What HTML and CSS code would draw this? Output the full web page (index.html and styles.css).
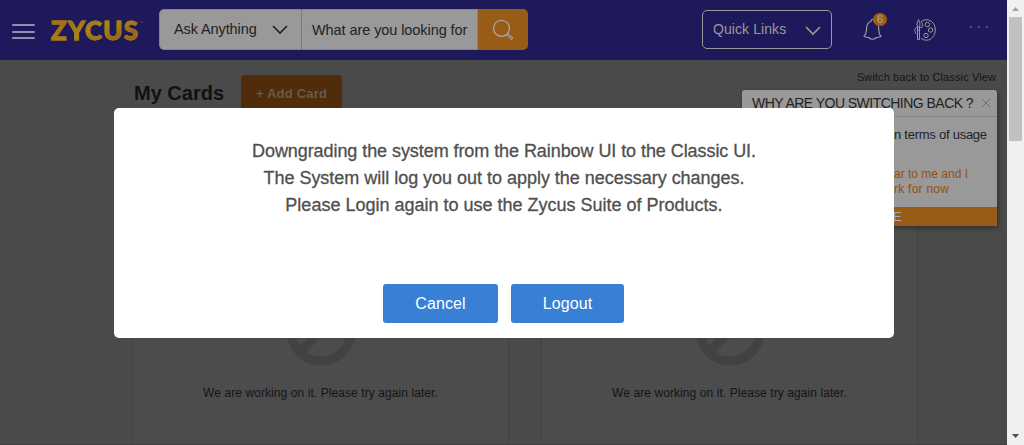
FILE: index.html
```html
<!DOCTYPE html>
<html lang="en">
<head>
<meta charset="utf-8">
<title>Zycus</title>
<link rel="stylesheet" href="styles.css">
</head>
<body>
<div class="app">
  <div class="page">
    <header class="header">
      <div class="burger"><i></i><i></i><i></i></div>
      <div class="logo"><span class="logo-text">ZYCUS</span><span class="tm">™</span></div>
      <div class="search">
        <div class="scope"><span>Ask Anything</span>
          <svg width="16" height="10" viewBox="0 0 16 10"><path d="M1 1l7 7 7-7" fill="none" stroke="#222" stroke-width="1.7"/></svg>
        </div>
        <div class="query">What are you looking for</div>
        <div class="go">
          <svg width="22" height="22" viewBox="0 0 22 22" fill="none" stroke="#a9a4a0"><circle cx="9.5" cy="9.3" r="8" stroke-width="1.3"/><path d="M15 15l5.5 5" stroke-width="2.6"/><path d="M15.5 15.5l4.5 4" stroke="#71512b" stroke-width=".8"/></svg>
        </div>
      </div>
      <div class="quick"><span>Quick Links</span>
        <svg width="16" height="10" viewBox="0 0 16 10"><path d="M1 1l7 7 7-7" fill="none" stroke="#999" stroke-width="1.7"/></svg>
      </div>
      <div class="bell">
        <svg width="20" height="24" viewBox="0 0 20 24" fill="none" stroke="#9998a5" stroke-width="1.2"><path d="M8 3.500c0-3 3-3 3 0 3 .7 4.700 3 4.700 6.500 0 4.500.3 6.500 2.300 8.500-2 .9-3.500 1-5 1.100-1.500 2.200-5.500 2.200-7 0-2-.1-3-.2-5-1.100 2.400-3 2.500-4.500 2.700-9C4 6 5.500 4 8 3.500z"/></svg>
        <span class="badge">6</span>
      </div>
      <svg class="palette" width="24" height="24" viewBox="0 0 24 24" fill="none" stroke="#9998a5" stroke-width="1"><path d="M8 4c2-2 4-2.500 6-2.200 5 .6 8.400 4.700 8.300 10.200-.1 6-4 10.200-8.800 10.200-2.500 0-4-.7-5.500-2M3.500 9.200c-2.300 2.300-2.300 4.500 0 7M7.200 9.500c2.600.3 2.800-1.300 2.300-3.300C9.200 4.900 8.900 4.400 8 4"/><path d="M5.500 1.500c1.600 3 1.800 5 1 7.500v12.500h-2V9c-.8-2.500-.6-4.500 1-7.500zM3.800 9h3.400M3.800 12h3.400"/><circle cx="14.400" cy="6.500" r="2.200"/><circle cx="17.600" cy="12" r="2.200"/><circle cx="13" cy="17.500" r="2.200"/></svg>
      <div class="more"><i></i><i></i><i></i></div>
    </header>
    <div class="title-row">
      <h1>My Cards</h1>
      <div class="add"><span>+ Add Card</span></div>
      <div class="switch"><span>Switch back to Classic View</span></div>
    </div>
    <main class="cards">
      <section class="card">
        <svg width="70" height="70" viewBox="0 0 70 70" fill="none" stroke="#424242" stroke-width="9"><circle cx="35" cy="35" r="30"/><path d="M14 56L56 14"/></svg>
        <p>We are working on it. Please try again later.</p>
      </section>
      <section class="card">
        <svg width="70" height="70" viewBox="0 0 70 70" fill="none" stroke="#424242" stroke-width="9"><circle cx="35" cy="35" r="30"/><path d="M14 56L56 14"/></svg>
        <p>We are working on it. Please try again later.</p>
      </section>
    </main>
  </div>
  <div class="scrollbar">
    <svg width="17" height="17" viewBox="0 0 17 17"><path d="M5 11l3.500-4 3.500 4z" fill="#a3a3a3"/></svg>
    <div class="thumb"></div>
    <svg width="17" height="17" viewBox="0 0 17 17"><path d="M5 6l3.500 4L12 6z" fill="#505050"/></svg>
  </div>
</div>

<aside class="popover">
  <div class="pop-head"><span>WHY ARE YOU SWITCHING BACK ?</span>
    <svg width="10" height="10" viewBox="0 0 10 10"><path d="M.5.5l9 9M9.500.5l-9 9" stroke="#707070"/></svg>
  </div>
  <div class="pop-body">
    <p class="usage">n terms of usage</p>
    <p class="reason r1">ar to me and I</p>
    <p class="reason r2">rk for now</p>
  </div>
  <div class="pop-foot">E</div>
</aside>

<div class="modal">
  <div class="message">
    <p class="m1">Downgrading the system from the Rainbow UI to the Classic UI.</p>
    <p class="m2">The System will log you out to apply the necessary changes.</p>
    <p>Please Login again to use the Zycus Suite of Products.</p>
  </div>
  <div class="actions">
    <button class="btn cancel">Cancel</button>
    <button class="btn logout">Logout</button>
  </div>
</div>
</body>
</html>
```
FILE: styles.css
```css
* { box-sizing: border-box; }
body { margin: 0; font-family: "Liberation Sans", Arial, sans-serif; color: #151515; background: #4a4a4a; overflow: hidden; }
p, h1 { margin: 0; }
svg { display: block; flex: none; }
span, p, h1 { white-space: nowrap; }
.app { display: flex; height: 445px; }
.page { width: 1007px; display: flex; flex-direction: column; background: #4a4a4a; overflow: hidden; }

.header { flex: none; height: 60px; background: #1e195a; display: flex; align-items: flex-start; }
.burger { margin: 24px 0 0 12px; width: 23px; display: flex; flex-direction: column; gap: 4px; }
.burger i { height: 2px; background: #9290aa; border-radius: 1px; }
.burger i + i { margin-top: .5px; }
.logo { margin: 17px 0 0 16px; width: 108px; display: flex; align-items: flex-start; height: 26px; }
.logo-text { font: 900 26px/26px Lato, sans-serif; letter-spacing: 1.1px; background: linear-gradient(160deg, #a16d16 20%, #a98a14 48%, #9d6418 75%); -webkit-background-clip: text; background-clip: text; color: transparent; -webkit-text-stroke: .8px #a47a17; }
.tm { font-size: 4px; line-height: 4px; margin-top: 4px; color: #665039; }
.search { margin-top: 9px; width: 369px; height: 41px; display: flex; border-radius: 5px; overflow: hidden; font-size: 15px; line-height: 39px; color: #222; }
.scope { width: 143px; background: #999; border: 1px solid #858585; border-right-color: #7b7b7b; border-radius: 5px 0 0 5px; display: flex; align-items: center; justify-content: space-between; padding: 0 13px 0 14px; font-size: 14.500px; letter-spacing: -.1px; }
.query { width: 176px; background: #999; border: 1px solid #858585; border-left: 0; padding-left: 10px; white-space: nowrap; line-height: 41px; font-size: 14.500px; letter-spacing: -.08px; }
.go { width: 50px; background: #995c17; padding: 10px 0 0 14px; }
.quick { margin: 10px 0 0 174px; width: 130px; height: 39px; border: 1px solid #999; border-radius: 5px; color: #999; font-size: 14px; letter-spacing: .08px; line-height: 37px; display: flex; align-items: center; justify-content: space-between; padding: 0 10px; }
.quick svg { margin-top: 3px; }
.bell { position: relative; margin: 18px 0 0 31px; width: 20px; }
.badge { position: absolute; left: 10px; top: -5px; width: 14px; height: 13px; border-radius: 7px; background: #a05c12; color: #aaa; font-size: 11px; line-height: 13px; text-align: center; }
.palette { margin: 18px 0 0 30px; }
.more { margin: 26px 0 0 33px; display: flex; gap: 6px; }
.more i { width: 2px; height: 2px; background: #54527c; }

.title-row { flex: none; height: 63px; display: flex; align-items: flex-start; padding: 0 11px 0 134px; }
h1 { width: 107px; margin-top: 21px; font-size: 20px; line-height: 24px; color: #111; }
.add { margin-top: 15px; width: 101px; height: 36px; border-radius: 4px; background: #502c0b; color: #6a5a4b; font-size: 13px; line-height: 37px; font-weight: bold; text-align: center; letter-spacing: .2px; }
.switch { margin: 9px 0 0 auto; font-size: 11px; line-height: 16px; letter-spacing: .11px; }
.cards { flex: 1; display: flex; gap: 32px; padding-left: 132px; border-bottom: 1px solid #414141; }
.card { width: 377px; border: 1px solid #424242; border-width: 0 1px; background: #4c4c4c; display: flex; flex-direction: column; align-items: center; padding-top: 173px; }
.card p { margin-top: 18px; font-size: 12px; line-height: 18px; letter-spacing: .08px; }
.scrollbar { width: 17px; background: #f0f0f0; display: flex; flex-direction: column; }
.thumb { width: 13px; height: 124px; margin: 0 auto auto 2px; background: #c1c1c1; }

.popover { position: absolute; left: 742px; top: 90px; width: 255px; height: 136px; background: #999; border-radius: 3px 3px 0 0; box-shadow: 1px 2px 5px rgba(0,0,0,.4); display: flex; flex-direction: column; color: #222; }
.pop-head { height: 27px; border-bottom: 1px solid #858585; display: flex; align-items: center; justify-content: space-between; padding: 0 6px 0 10px; font-size: 14px; letter-spacing: -.53px; }
.pop-body { flex: 1; padding-left: 152px; font-size: 13px; line-height: 15px; }
.usage { padding-top: 10px; letter-spacing: -.25px; }
.reason { font-size: 12px; color: #96500b; }
.r1 { padding-top: 25px; }
.r2 { letter-spacing: .25px; }
.pop-foot { height: 19px; background: #995c17; color: #aaa; padding-left: 151px; font-size: 13px; line-height: 20px; }

.modal { position: absolute; left: 114px; top: 108px; width: 780px; height: 230px; background: #fff; border-radius: 5px; padding-top: 30px; display: flex; flex-direction: column; align-items: center; }
.message { text-align: center; color: #4f4f4f; font-size: 18px; line-height: 27px; -webkit-text-stroke: .3px #4f4f4f; }
.m1 { letter-spacing: -.07px; }
.m2 { letter-spacing: -.02px; }
.actions { display: flex; gap: 13px; margin: 65px 1px 0 0; }
.btn { height: 39px; border: 0; border-radius: 3px; background: #3780d5; color: #fff; font: 16px/39px "Liberation Sans", Arial, sans-serif; letter-spacing: .1px; padding: 0; }
.cancel { width: 115px; }
.logout { width: 113px; }
```
